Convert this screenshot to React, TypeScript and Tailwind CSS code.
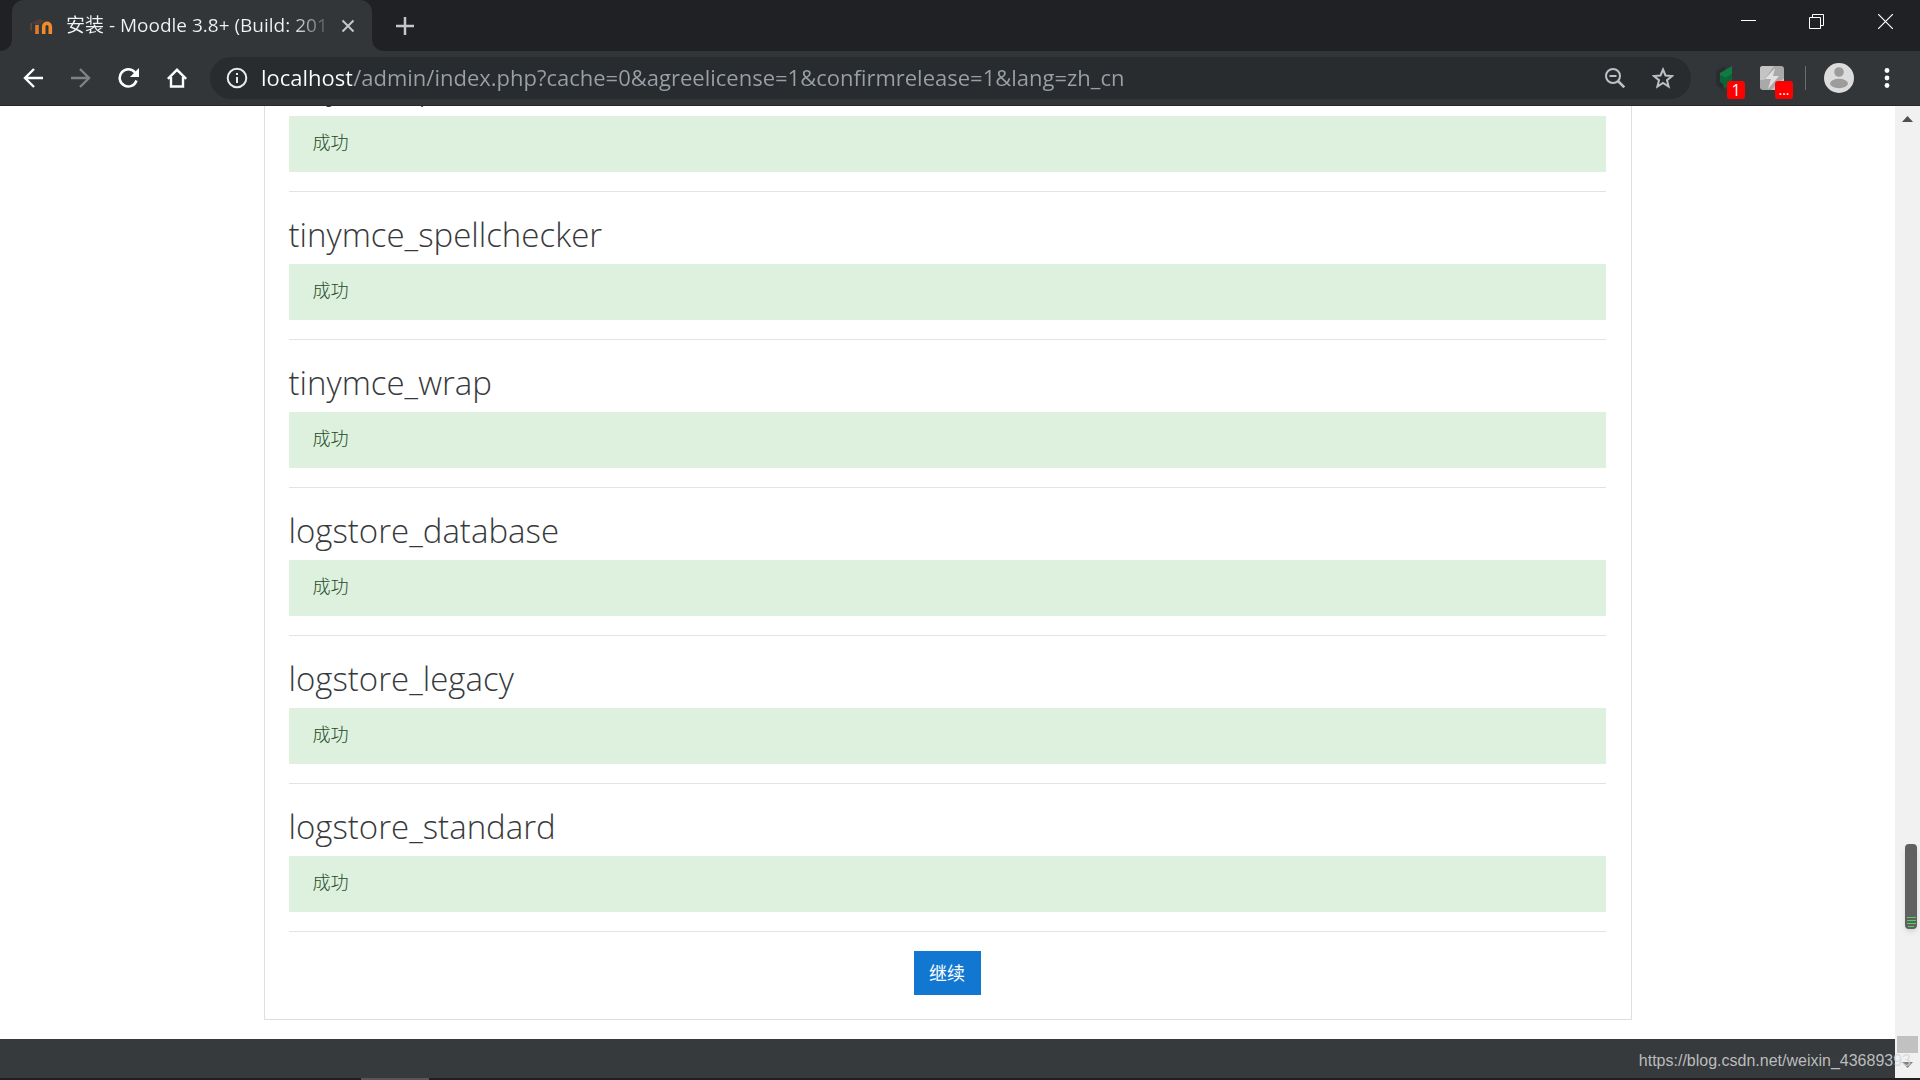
import { useState } from "react";
import type { ReactNode } from "react";

const plugins = [
  "tinymce_pdw",
  "tinymce_spellchecker",
  "tinymce_wrap",
  "logstore_database",
  "logstore_legacy",
  "logstore_standard",
];

function IconButton({ label, className = "", children }: { label: string; className?: string; children: ReactNode }) {
  return (
    <button type="button" aria-label={label} className={`flex shrink-0 items-center justify-center ${className}`}>
      {children}
    </button>
  );
}

function MoodleIcon() {
  return (
    <svg width="24" height="18" viewBox="0 0 24 18" fill="none" className="shrink-0">
      <path d="M7 17V8" stroke="#e07b2c" strokeWidth="3.600" />
      <path d="M13.700 17V9.500a3.300 3.300 0 0 1 6.600 0V17" stroke="#f08a2a" strokeWidth="3.600" />
      <path d="M2 5.500l7-3.500 5 1.500-3 4-5 .5z" fill="#4a3f3d" />
      <path d="M1.500 6c-.8 3-.6 5 0 7.500" stroke="#6e4a36" strokeWidth="1.500" />
    </svg>
  );
}

function TabStrip() {
  return (
    <div className="flex h-[51px] justify-between bg-[#202124]">
      <div className="flex">
        <div className="w-3 bg-[#323639]">
          <div className="h-full rounded-br-xl bg-[#202124]" />
        </div>
        <div className="flex w-[360px] items-center rounded-t-xl bg-[#323639] pl-[18px] pr-3">
          <MoodleIcon />
          <span className="ml-3 w-[262px] whitespace-nowrap bg-[linear-gradient(90deg,#f1f3f4_226px,#323639_268px)] bg-clip-text text-[19px] text-transparent">
            安装 - Moodle 3.8+ (Build: 201
          </span>
          <IconButton label="关闭标签页" className="ml-2 h-6 w-6">
            <svg width="14" height="14" viewBox="0 0 14 14" stroke="#c4c7ca" strokeWidth="2">
              <path d="M1.500 1.500l11 11M12.500 1.500l-11 11" />
            </svg>
          </IconButton>
        </div>
        <div className="w-3 bg-[#323639]">
          <div className="h-full rounded-bl-xl bg-[#202124]" />
        </div>
        <IconButton label="打开新的标签页" className="ml-2 w-[26px]">
          <svg width="18" height="18" viewBox="0 0 18 18" stroke="#c4c7ca" strokeWidth="2.500">
            <path d="M9 0v18M0 9h18" />
          </svg>
        </IconButton>
      </div>
      <div className="flex h-[42px]">
        <IconButton label="最小化" className="w-[68px]">
          <svg width="15" height="15" viewBox="0 0 15 15" stroke="#fff">
            <path d="M0 6.500h15" />
          </svg>
        </IconButton>
        <IconButton label="向下还原" className="w-[68px]">
          <svg width="15" height="15" viewBox="0 0 15 15" fill="none" stroke="#fff">
            <path d="M.5 3.500h11v11h-11zM3.500 3.500v-3h11v11h-3" />
          </svg>
        </IconButton>
        <IconButton label="关闭" className="w-[70px]">
          <svg width="15" height="15" viewBox="0 0 15 15" stroke="#fff" strokeWidth="1.200">
            <path d="M0 0l15 15M15 0L0 15" />
          </svg>
        </IconButton>
      </div>
    </div>
  );
}

function Toolbar() {
  const [url, setUrl] = useState(
    "localhost/admin/index.php?cache=0&agreelicense=1&confirmrelease=1&lang=zh_cn"
  );

  return (
    <div className="flex h-[55px] items-center border-b border-[#26282b] bg-[#323639] pl-[9px] pr-[18px]">
      <IconButton label="后退" className="h-12 w-12">
        <svg width="20" height="20" viewBox="0 0 20 20" fill="none" stroke="#fff" strokeWidth="2.400">
          <path d="M20 10H2M11 1l-9 9 9 9" />
        </svg>
      </IconButton>
      <IconButton label="前进" className="h-12 w-12">
        <svg width="20" height="20" viewBox="0 0 20 20" fill="none" stroke="#7f8285" strokeWidth="2.400">
          <path d="M0 10h18M9 1l9 9-9 9" />
        </svg>
      </IconButton>
      <IconButton label="重新加载" className="h-12 w-12">
        <svg width="22" height="20" viewBox="0 0 22 20" fill="none">
          <path d="M17 4.500A8.600 8.600 0 1 0 18.500 12.500" stroke="#fff" strokeWidth="2.500" />
          <path d="M21 0v9h-9z" fill="#fff" />
        </svg>
      </IconButton>
      <IconButton label="主页" className="h-12 w-12">
        <svg width="20" height="20" viewBox="0 0 20 20" fill="none" stroke="#fff" strokeWidth="2.400">
          <path d="M.8 10.800L10 1.800l9.200 9M4 9v9.500h12V9" />
        </svg>
      </IconButton>

      <form
        className="ml-[9px] flex h-[42px] flex-1 items-center rounded-full bg-[#282c2f] pl-4"
        onSubmit={(e) => e.preventDefault()}
      >
        <svg width="22" height="22" viewBox="0 0 22 22" fill="none" className="shrink-0">
          <circle cx="11" cy="11" r="9.300" stroke="#e8eaed" strokeWidth="2" />
          <path d="M11 10v6M11 6v2" stroke="#e8eaed" strokeWidth="2" />
        </svg>
        <input
          type="text"
          aria-label="地址和搜索栏"
          value={url}
          onChange={(e) => setUrl(e.target.value)}
          className="ml-[13px] min-w-0 flex-1 bg-[linear-gradient(90deg,#fff_91px,#9aa0a6_91px)] bg-clip-text pb-0.5 text-[22px] text-transparent caret-white outline-none"
        />
        <IconButton label="缩放" className="h-10 w-12">
          <svg width="20" height="20" viewBox="0 0 20 20" fill="none" stroke="#bdc1c6" strokeWidth="2">
            <circle cx="8" cy="8" r="7" />
            <path d="M4.500 8h7" />
            <path d="M13 13l6.300 6.300" strokeWidth="2.600" />
          </svg>
        </IconButton>
        <IconButton label="为此标签页添加书签" className="mr-1 h-10 w-12">
          <svg width="22" height="22" viewBox="0 0 22 22" fill="none" stroke="#bdc1c6" strokeWidth="2">
            <path d="M11 2.500l2.500 6 6.500.5-5 4.200 1.600 6.300L11 16l-5.600 3.500L7 13.200 2 9l6.500-.5z" />
          </svg>
        </IconButton>
      </form>

      <IconButton label="扩展程序" className="relative ml-[18px] h-9 w-[34px]">
        <svg width="24" height="24" viewBox="0 0 24 24">
          <path d="M11 0L2 5v14l8 5V17L6 15V8l5-3z" fill="#292d30" />
          <path d="M18 0L6 7v3l6 2 6-4z" fill="#107a43" />
          <path d="M6 9l6 3 6-4v9l-8 6-1-5-3-2z" fill="#0b6536" />
        </svg>
        <span className="absolute -bottom-[3px] left-[18px] flex h-[18px] w-[18px] items-center justify-center rounded-[3px] bg-[#f00] text-base text-white">
          1
        </span>
      </IconButton>
      <IconButton label="下载扩展" className="relative ml-3 h-9 w-[34px]">
        <svg width="24" height="24" viewBox="0 0 24 24">
          <rect width="24" height="24" rx="3" fill="#a9a9a9" />
          <path d="M0 3a3 3 0 0 1 3-3h11L4 14H0zM24 12v9a3 3 0 0 1-3 3H11z" fill="#c4c4c4" />
          <path d="M15 2L5 13h6L8 23l11-13h-6z" fill="#e0e0e0" />
        </svg>
        <span className="absolute -bottom-[3px] left-5 flex h-[18px] w-[18px] items-center justify-center rounded-[3px] bg-[#f00] text-sm text-white">
          ...
        </span>
      </IconButton>
      <div className="ml-4 h-6 w-px bg-[#6b6f73]" />
      <IconButton label="用户" className="ml-[18px]">
        <svg width="30" height="30" viewBox="0 0 30 30">
          <circle cx="15" cy="15" r="15" fill="#dcdcdc" />
          <circle cx="15" cy="9" r="4.800" fill="#9c9c9c" />
          <ellipse cx="15" cy="20.500" rx="9" ry="4.700" fill="#9c9c9c" />
        </svg>
      </IconButton>
      <IconButton label="自定义及控制" className="ml-[18px] w-[30px]">
        <svg width="6" height="20" viewBox="0 0 6 20" fill="#fff">
          <circle cx="3" cy="2.500" r="2.400" />
          <circle cx="3" cy="10" r="2.400" />
          <circle cx="3" cy="17.500" r="2.400" />
        </svg>
      </IconButton>
    </div>
  );
}

function Plugin({ name }: { name: string }) {
  return (
    <section className="shrink-0">
      <h2 className="mb-[7px] mt-[21px] text-[33px] font-light leading-[44px] text-[#373a3c]">{name}</h2>
      <div className="h-14 bg-[#def0de] px-6 text-lg font-light leading-[53px] text-[#1f4a1f]">成功</div>
      <hr className="mt-[19px] border-[#e1e3e4]" />
    </section>
  );
}

function Scrollbar() {
  return (
    <div className="relative flex w-[25px] shrink-0 flex-col items-center justify-between bg-[#f1f1f1] pt-[10px]">
      <svg width="11" height="6" viewBox="0 0 11 6" fill="#505050">
        <path d="M0 6l5.500-6L11 6z" />
      </svg>
      <div className="flex flex-col items-center">
        <div className="h-[17px] w-[21px] bg-[#c1c1c1]" />
        <svg width="11" height="6" viewBox="0 0 11 6" fill="#808080" className="mb-[10px] mt-[9px]">
          <path d="M0 0l5.500 6L11 0z" />
        </svg>
      </div>
      <div className="absolute bottom-[149px] right-[3px] flex h-[85px] w-3 flex-col items-center justify-end gap-[2px] rounded bg-[#606060] pb-[2px] shadow-md">
        <div className="h-px w-[9px] bg-[#4fd35f]" />
        <div className="h-px w-[9px] bg-[#4fd35f]" />
        <div className="h-px w-[9px] bg-[#4fd35f]" />
        <div className="h-px w-[6px] bg-[#4fd35f]" />
      </div>
    </div>
  );
}

export default function App() {
  return (
    <div className="flex h-screen flex-col overflow-hidden bg-white font-['Open_Sans','Noto_Sans_CJK_SC',sans-serif]">
      <header className="shrink-0">
        <TabStrip />
        <Toolbar />
      </header>

      <div className="relative flex min-h-0 flex-1">
        <div className="flex min-w-0 flex-1 flex-col justify-end overflow-hidden">
          <main className="mx-auto mb-[19px] w-full max-w-[1368px] shrink-0 border border-[#dcdedf] pb-6 pl-6 pr-[25px]">
            {plugins.map((name) => (
              <Plugin key={name} name={name} />
            ))}
            <div className="mt-[19px] flex justify-center">
              <button type="button" className="h-11 w-[67px] bg-[#1177d1] text-lg text-white">
                继续
              </button>
            </div>
          </main>
          <footer className="h-[39px] shrink-0 bg-[#373a3c]" />
        </div>
        <Scrollbar />
        <span className="absolute bottom-[5px] right-[9px] font-['Liberation_Sans',sans-serif] text-base text-[#d4d6d7]/85">
          https://blog.csdn.net/weixin_43689393
        </span>
      </div>

      <div className="flex h-[2px] shrink-0 bg-[#231f20] pl-[361px]">
        <div className="w-[68px] bg-[#5b5556]" />
      </div>
    </div>
  );
}
